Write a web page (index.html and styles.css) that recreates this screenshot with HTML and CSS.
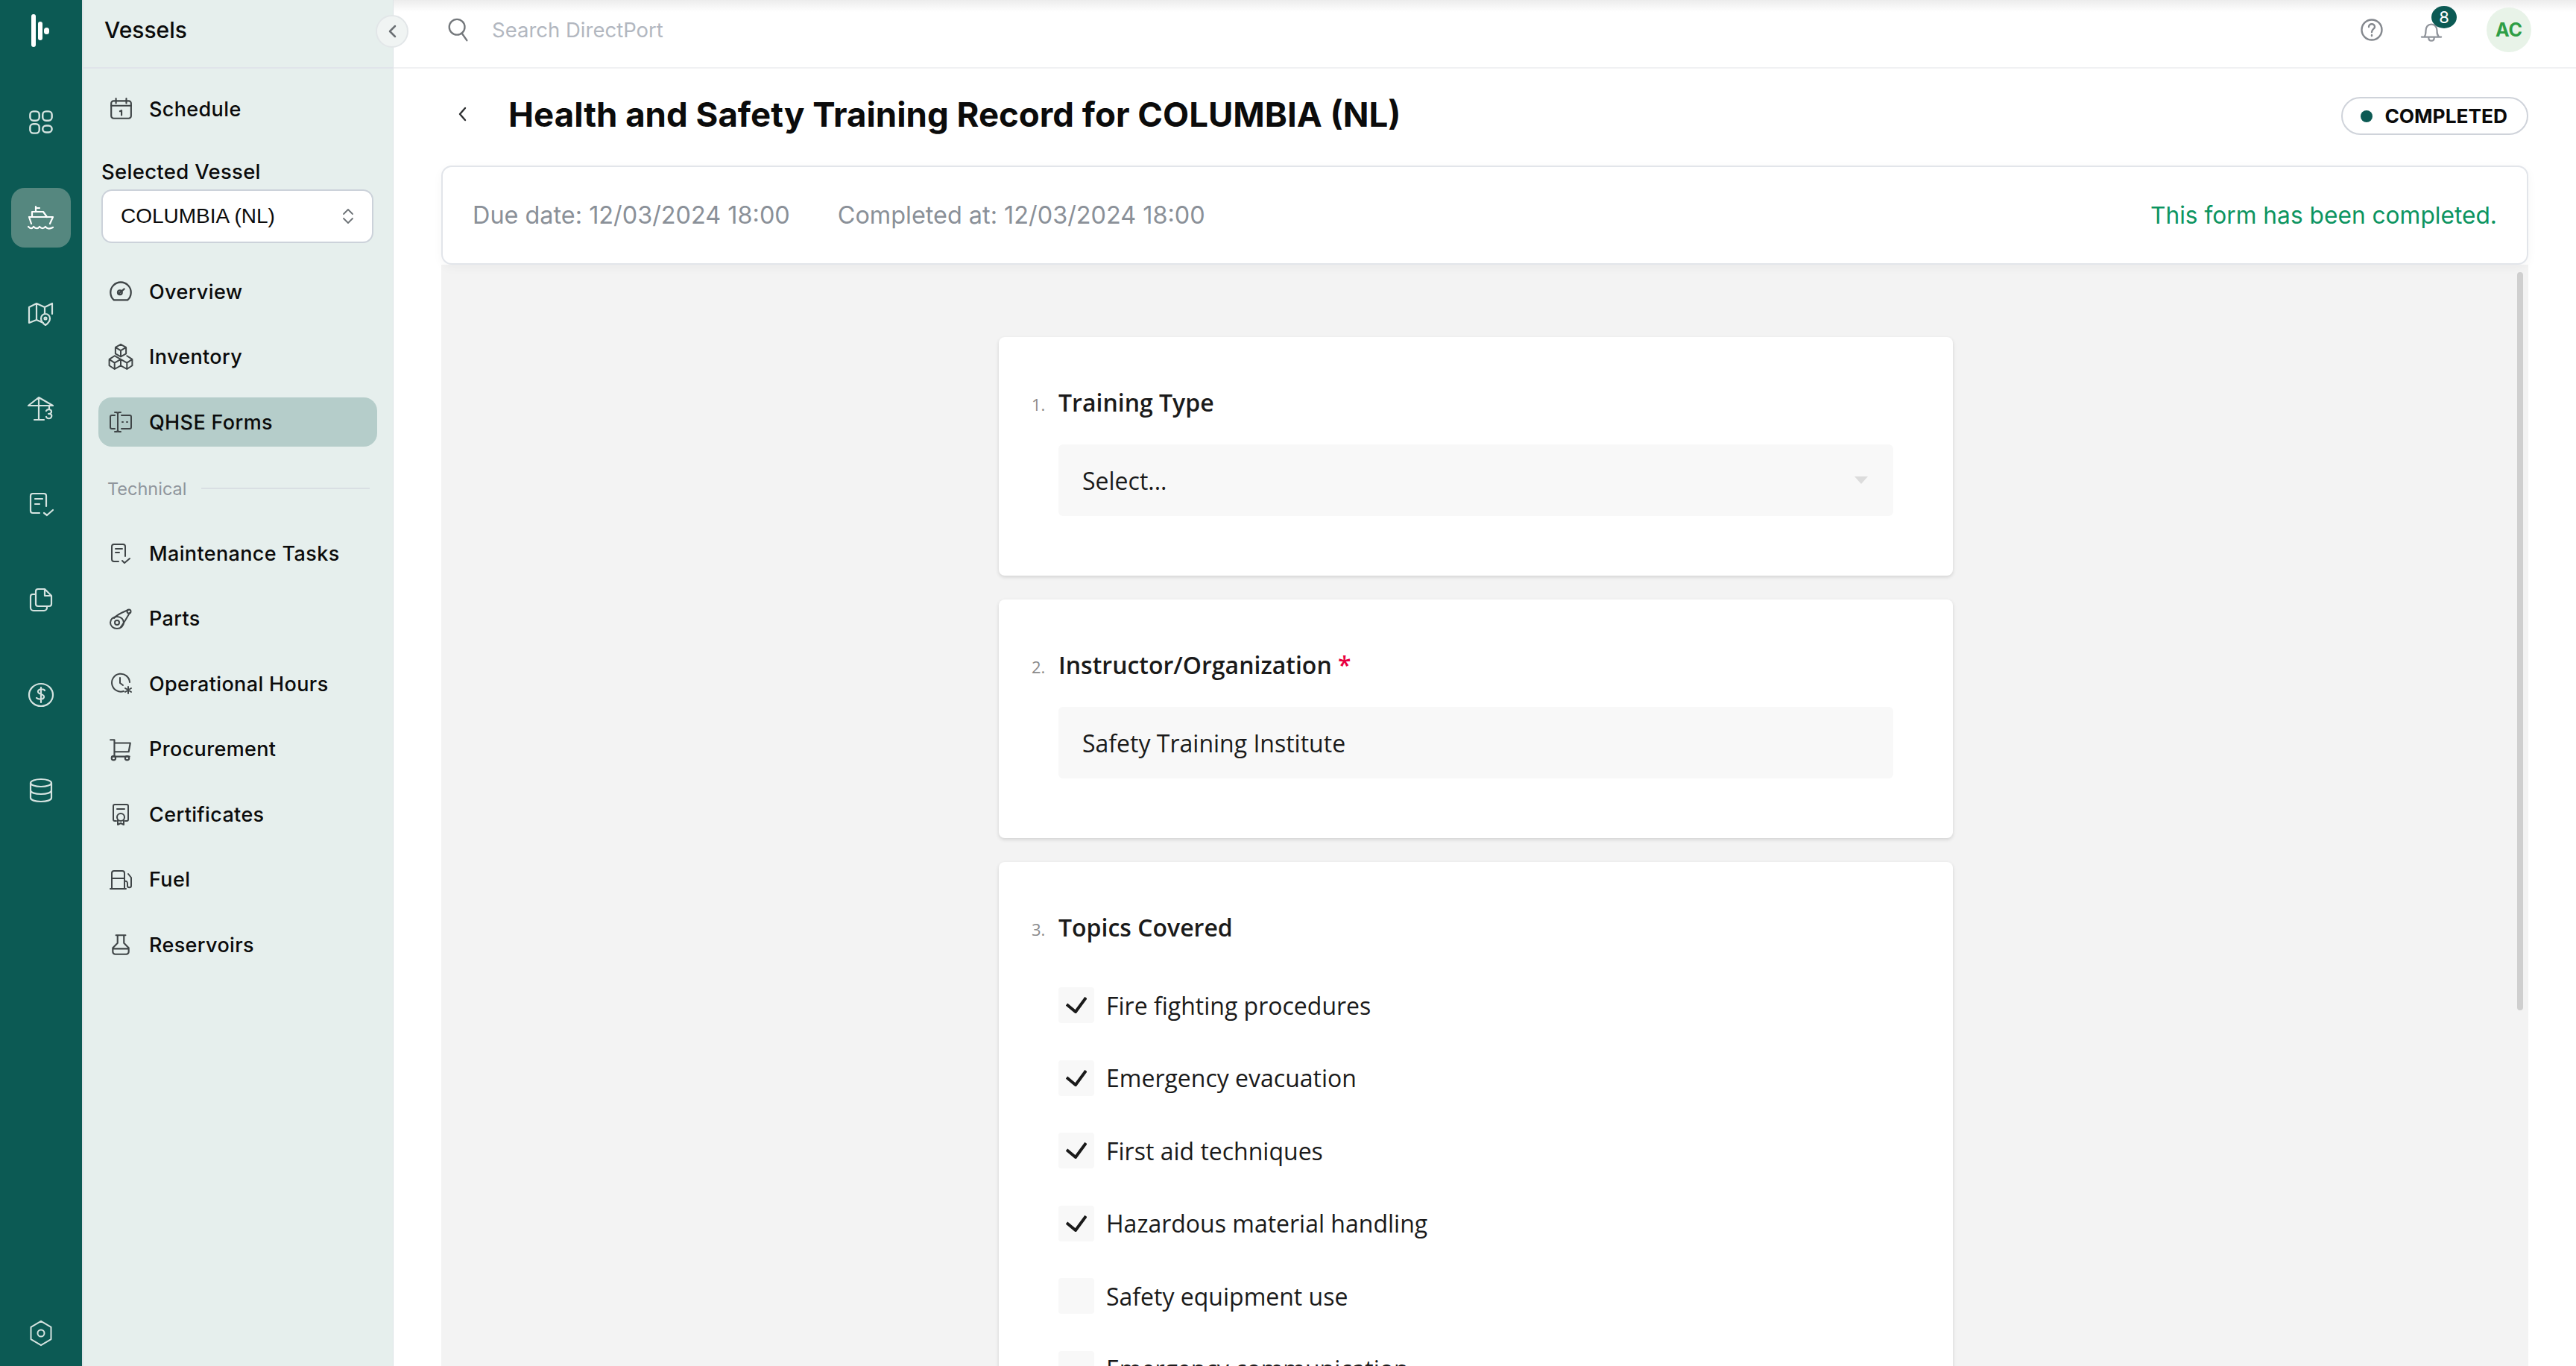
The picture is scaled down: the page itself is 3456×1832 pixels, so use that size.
FILE: index.html
```html
<!DOCTYPE html>
<html lang="en">
<head>
    <meta charset="UTF-8">
    <title>Health and Safety Training Record</title>
    <link rel="stylesheet" href="styles.css">
</head>
<body>

    <!-- Icon Rail -->
    <div class="rail">
        <div class="logo">
            <svg width="40" height="46" viewBox="0 0 40 46"><rect x="6" y="0" width="6" height="44" rx="3"/><rect x="15" y="10" width="6" height="25" rx="3"/><rect x="23" y="18" width="7" height="9" rx="3.500"/></svg>
        </div>
        <div class="rail-list">
            <a class="rail-item"><svg class="rail-icon" viewBox="0 0 32 32"><rect x="3" y="3" width="11" height="11" rx="4"/><rect x="18" y="3" width="11" height="11" rx="4"/><rect x="3" y="18" width="11" height="11" rx="4"/><rect x="18" y="20" width="11" height="8" rx="4"/></svg></a>
            <a class="rail-item active"><svg class="rail-icon" viewBox="0 0 36 32"><path d="M11 1v7M11 3h5M6 15V8h15l5 7M2 15h32l-4 9M2 15l3 9M1 28c3 3 5 3 7 0 3 3 6 3 8 0 3 3 5 3 8 0 2 3 6 3 10 1"/></svg></a>
            <a class="rail-item"><svg class="rail-icon" viewBox="0 0 36 36"><path d="M2 10l10-5 11 5 10-5v14M12 5v22M23 10v9M2 10v21l10-4 9 4M24 34s-6-4-6-9a6 6 0 0 1 12 0c0 5-6 9-6 9z"/><circle cx="24" cy="25" r="1.500"/></svg></a>
            <a class="rail-item"><svg class="rail-icon" viewBox="0 0 36 36"><path d="M1 14L15 3l19 11zM15 3v30M9 33h13M15 14v8M29 14v4M25 21c2-3 7-2 7 1 0 2-2 3-4 3 3 0 5 1 4 4-1 3-6 3-7 0"/></svg></a>
            <a class="rail-item"><svg class="rail-icon" viewBox="0 0 36 36"><path d="M16 30H7a3 3 0 0 1-3-3V7a3 3 0 0 1 3-3h15a3 3 0 0 1 3 3v14M10 11h10M10 18h6M22 30l4 3 8-7"/></svg></a>
            <a class="rail-item"><svg class="rail-icon" viewBox="0 0 36 36"><path d="M14 4h9l9 9v11a3 3 0 0 1-3 3H14a3 3 0 0 1-3-3V7a3 3 0 0 1 3-3zM23 4v9h9M11 11H7a3 3 0 0 0-3 3v15a4 4 0 0 0 4 4h14a4 4 0 0 0 4-4v-2"/></svg></a>
            <a class="rail-item"><svg class="rail-icon" viewBox="0 0 36 36"><ellipse cx="18" cy="18" rx="16" ry="15"/><path d="M23 12c-1-2-8-3-9 1-1 5 9 3 8 8-1 4-8 3-10 1M18 8v20"/></svg></a>
            <a class="rail-item"><svg class="rail-icon" viewBox="0 0 36 36"><ellipse cx="18" cy="8" rx="14" ry="5"/><path d="M4 8v20c0 3 6 5 14 5s14-2 14-5V8M4 18c0 3 6 5 14 5s14-2 14-5"/></svg></a>
        </div>
        <a class="rail-item rail-bottom"><svg class="rail-icon" viewBox="0 0 36 40"><path d="M18 2l15 9v18l-15 9-15-9V11z"/><circle cx="18" cy="20" r="5"/></svg></a>
    </div>

    <!-- Vessels Navigation -->
    <div class="subnav">
        <div class="subnav-head">
            <span class="subnav-title">Vessels</span>
            <span class="collapse"><svg width="16" height="20" viewBox="0 0 16 20"><path d="M12 3L5 10l7 7"/></svg></span>
        </div>
        <a class="nav-item nav-first">
            <svg class="nav-icon" viewBox="0 0 30 30"><rect x="3" y="5" width="25" height="22" rx="3"/><path d="M3 11h25M9 2v6M22 2v6M14 18l2-1v6"/></svg>
            Schedule
        </a>
        <div class="vessel-label">Selected Vessel</div>
        <div class="vessel-select">
            <span>COLUMBIA (NL)</span>
            <svg width="16" height="24" viewBox="0 0 16 24"><path d="M2 9l6-6 6 6M2 15l6 6 6-6"/></svg>
        </div>
        <div class="nav-group">
            <a class="nav-item">
                <svg class="nav-icon" viewBox="1 2 28 26"><path d="M7 25a12 12 0 1 1 16 0zM13 17l6-5"/><circle cx="14" cy="16" r="2.500"/></svg>
                Overview
            </a>
            <a class="nav-item">
                <svg class="nav-icon icon-boxes" viewBox="4 3 24 27"><path d="M16 2l6 3.500v7L16 16l-6-3.500v-7zM10 5.500l6 3.500 6-3.500M16 9v7M9 15l7 4v7l-7 4-6-4v-7zM3 19l6 4 7-4M9 23v7M23 15l6 4v7l-6 4-7-4M16 19l7 4 6-4M23 23v7"/></svg>
                Inventory
            </a>
            <a class="nav-item active">
                <svg class="nav-icon" viewBox="0 0 32 30"><path d="M8 6H4a2 2 0 0 0-2 2v14a2 2 0 0 0 2 2h4M17 6h11a2 2 0 0 1 2 2v14a2 2 0 0 1-2 2H17M12 3v24M8 2h3l1 2 1-2h3M8 28h3l1-2 1 2h3M18 15h1M24 15h1"/></svg>
                QHSE Forms
            </a>
        </div>
        <div class="nav-section"><span>Technical</span><i></i></div>
        <div class="nav-group">
            <a class="nav-item">
                <svg class="nav-icon" viewBox="0 0 32 30"><path d="M13 26H7a3 3 0 0 1-3-3V6a3 3 0 0 1 3-3h12a3 3 0 0 1 3 3v13M9 9h9M9 14h5M18 25l3 3 7-6"/></svg>
                Maintenance Tasks
            </a>
            <a class="nav-item">
                <svg class="nav-icon" viewBox="0 0 32 30"><path d="M7 14C12 8 22 5 26 3M16 26c3-3 9-14 12-19"/><ellipse cx="11" cy="20" rx="9" ry="8"/><circle cx="11" cy="20" r="3"/><circle cx="27" cy="5" r="2.500"/></svg>
                Parts
            </a>
            <a class="nav-item">
                <svg class="nav-icon" viewBox="0 0 32 30"><path d="M20 25a12 12 0 1 1 8-12M15 7v7l4 3"/><path d="M26 19v9M22 21l8 5M30 21l-8 5"/></svg>
                Operational Hours
            </a>
            <a class="nav-item">
                <svg class="nav-icon" viewBox="0 0 30 30"><path d="M2 3h5v21M7 7h20l-2 11H7M4 24h22"/><circle cx="6" cy="26" r="2.500"/><circle cx="23" cy="26" r="2.500"/></svg>
                Procurement
            </a>
            <a class="nav-item">
                <svg class="nav-icon" viewBox="0 0 30 32"><path d="M9 25H7a2 2 0 0 1-2-2V5a2 2 0 0 1 2-2h16a2 2 0 0 1 2 2v18a2 2 0 0 1-2 2h-2M10 9h10M11 24v6l4-2 4 2v-6"/><circle cx="15" cy="20" r="5"/></svg>
                Certificates
            </a>
            <a class="nav-item">
                <svg class="nav-icon" viewBox="0 0 32 30"><path d="M4 27V6a3 3 0 0 1 3-3h11a3 3 0 0 1 3 3v21M2 27h21M4 13h17M21 17c3-1 4 1 4 3v3c0 3 5 3 5 0V12l-4-5"/></svg>
                Fuel
            </a>
            <a class="nav-item">
                <svg class="nav-icon" viewBox="0 0 30 30"><path d="M9 3h12M11 3v10l-6 6v5a3 3 0 0 0 3 3h14a3 3 0 0 0 3-3v-5l-6-6V3M5 20h20"/></svg>
                Reservoirs
            </a>
        </div>
    </div>

    <!-- Main Area -->
    <div class="main">
        <div class="topbar">
            <svg class="search-icon" viewBox="0 0 32 36"><ellipse cx="14" cy="14" rx="11" ry="11"/><path d="M21 23l7 10"/></svg>
            <span class="search-text">Search DirectPort</span>
            <div class="topbar-right">
                <svg class="help-icon" viewBox="0 0 32 32"><circle cx="16" cy="16" r="13.500"/><path d="M12 12c0-5 8-5 8 0 0 3-4 3-4 7M16 23v1"/></svg>
                <div class="bell">
                    <svg viewBox="0 0 30 32"><path d="M5 24c2-3 2-5 2-9 0-5 3-9 8-9s8 4 8 9c0 4 0 6 3 9zM1 24h28M11 25c0 6 8 6 8 0"/></svg>
                    <span class="badge">8</span>
                </div>
                <div class="avatar">AC</div>
            </div>
        </div>

        <div class="page-head">
            <svg class="back" viewBox="0 0 14 22"><path d="M11 3l-7 8 7 8"/></svg>
            <h1>Health and Safety Training Record for COLUMBIA (NL)</h1>
            <div class="status"><i></i>COMPLETED</div>
        </div>

        <div class="info-bar">
            <span class="info-date">Due date: 12/03/2024 18:00</span>
            <span class="info-date">Completed at: 12/03/2024 18:00</span>
            <span class="info-done">This form has been completed.</span>
        </div>

        <div class="form-area">
            <div class="scroll-thumb"></div>

            <div class="card">
                <div class="question"><span class="num">1.</span>Training Type</div>
                <div class="field">Select...<i class="caret"></i></div>
            </div>

            <div class="card">
                <div class="question"><span class="num">2.</span>Instructor/Organization <b class="req">*</b></div>
                <div class="field">Safety Training Institute</div>
            </div>

            <div class="card">
                <div class="question"><span class="num">3.</span>Topics Covered</div>
                <div class="check-list">
                    <div class="check-row"><span class="box"><svg viewBox="0 0 28 22"><path d="M1 10l12 10L27 1"/></svg></span>Fire fighting procedures</div>
                    <div class="check-row"><span class="box"><svg viewBox="0 0 28 22"><path d="M1 10l12 10L27 1"/></svg></span>Emergency evacuation</div>
                    <div class="check-row"><span class="box"><svg viewBox="0 0 28 22"><path d="M1 10l12 10L27 1"/></svg></span>First aid techniques</div>
                    <div class="check-row"><span class="box"><svg viewBox="0 0 28 22"><path d="M1 10l12 10L27 1"/></svg></span>Hazardous material handling</div>
                    <div class="check-row"><span class="box"></span>Safety equipment use</div>
                    <div class="check-row"><span class="box"></span>Emergency communication</div>
                </div>
            </div>
        </div>
    </div>

</body>
</html>
```

FILE: styles.css
```css
/* General Styles */
body {
    margin: 0;
    display: flex;
    height: 1832px;
    overflow: hidden;
    font-family: 'Inter', 'Liberation Sans', sans-serif;
    color: #0b0b0b;
    background-color: white;
}

svg {
    fill: none;
    stroke: currentColor;
    stroke-linecap: round;
    stroke-linejoin: round;
}

/* Icon Rail */
.rail {
    width: 110px;
    flex-shrink: 0;
    background-color: #0c5a54;
    color: #d5e3e0;
    display: flex;
    flex-direction: column;
    align-items: center;
}

.logo {
    height: 84px;
    display: flex;
    align-items: center;
    justify-content: center;
}

.logo svg {
    fill: white;
    stroke: none;
    margin-left: 2px;
}

.rail-list {
    display: flex;
    flex-direction: column;
    gap: 48px;
    margin-top: 40px;
}

.rail-item {
    width: 80px;
    height: 80px;
    border-radius: 18px;
    display: flex;
    align-items: center;
    justify-content: center;
}

.rail-item.active {
    background-color: #55877f;
    color: white;
}

.rail-bottom {
    margin-top: auto;
    margin-bottom: 4px;
}

.rail-icon {
    width: 36px;
    height: 36px;
    stroke-width: 2.200;
}

/* Vessels Navigation */
.subnav {
    width: 418px;
    flex-shrink: 0;
    box-sizing: border-box;
    background-color: #e6efed;
    border-left: 2px solid #dde4e6;
    border-right: 1px solid #dde4e6;
    padding: 0 21px 0 20px;
}

.subnav-head {
    height: 92px;
    margin: 0 -21px 0 -20px;
    padding-left: 28px;
    border-bottom: 2px solid #e0e4ea;
    box-sizing: border-box;
    position: relative;
}

.subnav-title {
    font-size: 30px;
    font-weight: 500;
    line-height: 80px;
}

.collapse {
    position: absolute;
    right: -21px;
    top: 20px;
    width: 40px;
    height: 40px;
    border-radius: 50%;
    background-color: #f0f4f3;
    border: 2px solid #e2e6e8;
    color: #6b7074;
    display: flex;
    align-items: center;
    justify-content: center;
    z-index: 2;
}

.collapse svg {
    stroke-width: 2.500;
}

.nav-item {
    height: 66px;
    box-sizing: border-box;
    padding-left: 14px;
    border-radius: 18px;
    display: flex;
    align-items: center;
    gap: 22px;
    font-size: 27px;
    font-weight: 500;
    letter-spacing: 0.36px;
}

.nav-first {
    margin-top: 21px;
}

.nav-item.active {
    background-color: #b5cdca;
}

.nav-icon {
    width: 32px;
    height: 32px;
    flex-shrink: 0;
    overflow: visible;
    color: #3f4547;
    stroke-width: 2;
}

.icon-boxes {
    stroke-width: 1.700;
}

.vessel-label {
    font-size: 27.500px;
    font-weight: 500;
    letter-spacing: 0.3px;
    margin: 34px 0 0 4px;
    line-height: 34px;
}

.vessel-select {
    height: 72px;
    width: 365px;
    box-sizing: border-box;
    margin: 7px 0 0 4px;
    padding: 0 24px;
    background-color: white;
    border: 2px solid #ccd2da;
    border-radius: 14px;
    display: flex;
    align-items: center;
    justify-content: space-between;
    font-family: 'Liberation Sans', sans-serif;
    font-size: 28px;
}

.vessel-select svg {
    color: #6d7276;
    stroke-width: 1.800;
}

.nav-group {
    display: flex;
    flex-direction: column;
    gap: 21.500px;
    margin-top: 32px;
}

.nav-section {
    display: flex;
    align-items: center;
    gap: 20px;
    margin: 40px 0 0 12px;
    padding-right: 10px;
    height: 32px;
    font-size: 23.500px;
    color: #8f959c;
}

.nav-section i {
    flex: 1;
    height: 2px;
    background-color: #d9dfe3;
}

.nav-section + .nav-group {
    margin-top: 38px;
}

/* Top Bar */
.main {
    flex: 1;
    min-width: 0;
    display: flex;
    flex-direction: column;
}

.topbar {
    height: 92px;
    flex-shrink: 0;
    box-sizing: border-box;
    border-bottom: 2px solid #f0f1f3;
    background: linear-gradient(#ececec, white 16px);
    padding: 0 60px 10px 71px;
    display: flex;
    align-items: center;
}

.search-icon {
    width: 32px;
    height: 34px;
    color: #74787c;
    stroke-width: 2.500;
}

.search-text {
    margin-left: 29px;
    font-size: 27.500px;
    color: #b2b7c0;
}

.topbar-right {
    margin-left: auto;
    display: flex;
    align-items: center;
}

.help-icon {
    width: 32px;
    height: 38px;
    color: #84888e;
    stroke-width: 2.400;
}

.bell {
    position: relative;
    margin-left: 49px;
    color: #90949b;
    height: 36px;
}

.bell svg {
    display: block;
    width: 30px;
    height: 30px;
    stroke-width: 2.400;
    margin-top: 5px;
}

.badge {
    position: absolute;
    left: 15px;
    top: -14px;
    width: 34px;
    height: 30px;
    border-radius: 50%;
    background-color: #0c5a54;
    color: white;
    font-size: 22px;
    line-height: 30px;
    text-align: center;
}

.avatar {
    width: 60px;
    height: 60px;
    margin-left: 59px;
    border-radius: 50%;
    background-color: #e8f3e8;
    color: #2e9e46;
    font-size: 25px;
    font-weight: 700;
    line-height: 60px;
    text-align: center;
}

/* Page Heading */
.page-head {
    height: 130px;
    box-sizing: border-box;
    padding: 0 64px 8px 85px;
    display: flex;
    align-items: center;
    flex-shrink: 0;
}

.back {
    width: 14px;
    height: 22px;
    color: #2d2f31;
    stroke-width: 2.400;
}

h1 {
    margin: 0 0 0 55px;
    font-size: 45.600px;
    font-weight: 700;
}

.status {
    margin: 5px 0 0 auto;
    height: 51px;
    box-sizing: border-box;
    padding: 0 26px 0 24px;
    border: 2px solid #cfd3da;
    border-radius: 26px;
    display: flex;
    align-items: center;
    gap: 16px;
    font-size: 26.300px;
    font-weight: 700;
}

.status i {
    width: 16px;
    height: 16px;
    border-radius: 50%;
    background-color: #0c5a54;
}

/* Info Bar */
.info-bar {
    margin: 0 64px;
    height: 133px;
    flex-shrink: 0;
    box-sizing: border-box;
    padding: 0 40px;
    background-color: white;
    border: 2px solid #e2e5ea;
    border-radius: 14px;
    box-shadow: 0 4px 14px rgba(0, 0, 0, 0.04);
    display: flex;
    align-items: center;
    gap: 64px;
    font-size: 32.400px;
    position: relative;
    z-index: 1;
}

.info-date {
    color: #8a9098;
}

.info-done {
    margin-left: auto;
    font-size: 31.700px;
    color: #0c9460;
}

/* Form Area */
.form-area {
    margin: 0 64px;
    flex: 1;
    min-height: 0;
    overflow: hidden;
    background-color: #f3f3f3;
    padding: 97px 24px 0 0;
    display: flex;
    flex-direction: column;
    align-items: center;
    gap: 32px;
    position: relative;
    font-family: 'Open Sans', sans-serif;
    color: #1a1a1a;
}

.scroll-thumb {
    position: absolute;
    right: 7px;
    top: 10px;
    width: 8px;
    height: 990px;
    border-radius: 4px;
    background-color: #cfcfcf;
}

.card {
    width: 1280px;
    flex-shrink: 0;
    box-sizing: border-box;
    background-color: white;
    border-radius: 8px;
    box-shadow: 0 2px 5px rgba(0, 0, 0, 0.14);
    padding: 66px 80px 80px;
}

.question {
    position: relative;
    font-size: 32px;
    font-weight: 600;
    line-height: 44px;
}

.num {
    position: absolute;
    left: -36px;
    top: 2px;
    font-size: 22px;
    font-weight: 400;
    color: #8b8b8b;
}

.req {
    color: #e8003f;
    font-weight: 600;
}

.field {
    height: 96px;
    margin-top: 34px;
    padding: 0 32px;
    background-color: #f8f8f8;
    border-radius: 6px;
    display: flex;
    align-items: center;
    justify-content: space-between;
    font-size: 32px;
}

.caret {
    width: 0;
    height: 0;
    margin-right: 2px;
    border-left: 9px solid transparent;
    border-right: 9px solid transparent;
    border-top: 10px solid #dcdcdc;
}

.check-list {
    display: flex;
    flex-direction: column;
    gap: 49.500px;
    margin-top: 58px;
}

.check-row {
    height: 48px;
    display: flex;
    align-items: center;
    gap: 16px;
    font-size: 32px;
}

.box {
    width: 48px;
    height: 48px;
    border-radius: 4px;
    background-color: #f8f8f8;
    display: flex;
    align-items: center;
    justify-content: center;
}

.box svg {
    width: 28px;
    height: 22px;
    stroke-width: 4;
    stroke-linecap: butt;
    stroke-linejoin: miter;
}
```
